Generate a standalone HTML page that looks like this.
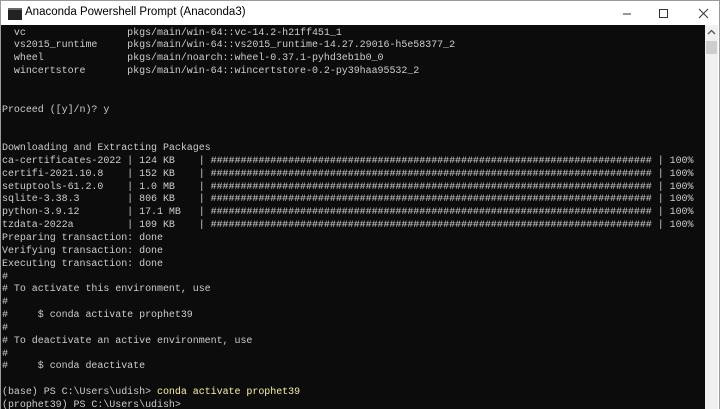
<!DOCTYPE html>
<html><head><style>
body{margin:0;width:720px;height:409px;overflow:hidden;background:#fff;position:relative;font-family:"Liberation Sans",sans-serif}
.win{position:absolute;left:0;top:0;width:718px;height:408px;border:1px solid #9a9a9a;border-bottom:none;}
.title{position:absolute;left:0;top:0;width:718px;height:24px;background:#fff}
.title .ic{position:absolute;left:7px;top:7px;width:14px;height:10px;background:#222;border-top:2px solid #666}
.title .t{position:absolute;left:24px;top:5px;font-size:11.5px;color:#000}
.con{position:absolute;left:1px;top:25px;width:704px;height:384px;background:#0c0c0c;overflow:hidden}
.sb{position:absolute;left:705px;top:25px;width:13px;height:384px;background:#f0f0f0}
pre{margin:0;position:absolute;left:1px;top:2.5px;font-family:"Liberation Mono",monospace;font-size:10px;letter-spacing:-0.04px;line-height:12.85px;color:#cccccc}
.y{color:#f9f1a5}
</style></head><body>
<div class="win">
<div class="title"><div class="ic"></div><div class="t">Anaconda Powershell Prompt (Anaconda3)</div>
<svg style="position:absolute;left:600px;top:6px" width="110" height="14"><line x1="22" y1="7" x2="30" y2="7" stroke="#333" stroke-width="1"/><rect x="58.5" y="2.5" width="8" height="8" fill="none" stroke="#333"/><path d="M98 2 L107 11 M107 2 L98 11" stroke="#333" stroke-width="1"/></svg>
</div>
</div>
<div class="con"><pre>  vc                 pkgs/main/win-64::vc-14.2-h21ff451_1
  vs2015_runtime     pkgs/main/win-64::vs2015_runtime-14.27.29016-h5e58377_2
  wheel              pkgs/main/noarch::wheel-0.37.1-pyhd3eb1b0_0
  wincertstore       pkgs/main/win-64::wincertstore-0.2-py39haa95532_2


Proceed ([y]/n)? y


Downloading and Extracting Packages
ca-certificates-2022 | 124 KB    | ########################################################################## | 100%
certifi-2021.10.8    | 152 KB    | ########################################################################## | 100%
setuptools-61.2.0    | 1.0 MB    | ########################################################################## | 100%
sqlite-3.38.3        | 806 KB    | ########################################################################## | 100%
python-3.9.12        | 17.1 MB   | ########################################################################## | 100%
tzdata-2022a         | 109 KB    | ########################################################################## | 100%
Preparing transaction: done
Verifying transaction: done
Executing transaction: done
#
# To activate this environment, use
#
#     $ conda activate prophet39
#
# To deactivate an active environment, use
#
#     $ conda deactivate

(base) PS C:\Users\udish> <span class="y">conda activate prophet39</span>
(prophet39) PS C:\Users\udish></pre></div>
<div class="sb"><svg width="13" height="30"><path d="M3 9 L6.5 5.5 L10 9" fill="none" stroke="#555" stroke-width="1.3"/><rect x="1" y="16" width="11" height="13" fill="#cdcdcd"/></svg></div>
</body></html>
